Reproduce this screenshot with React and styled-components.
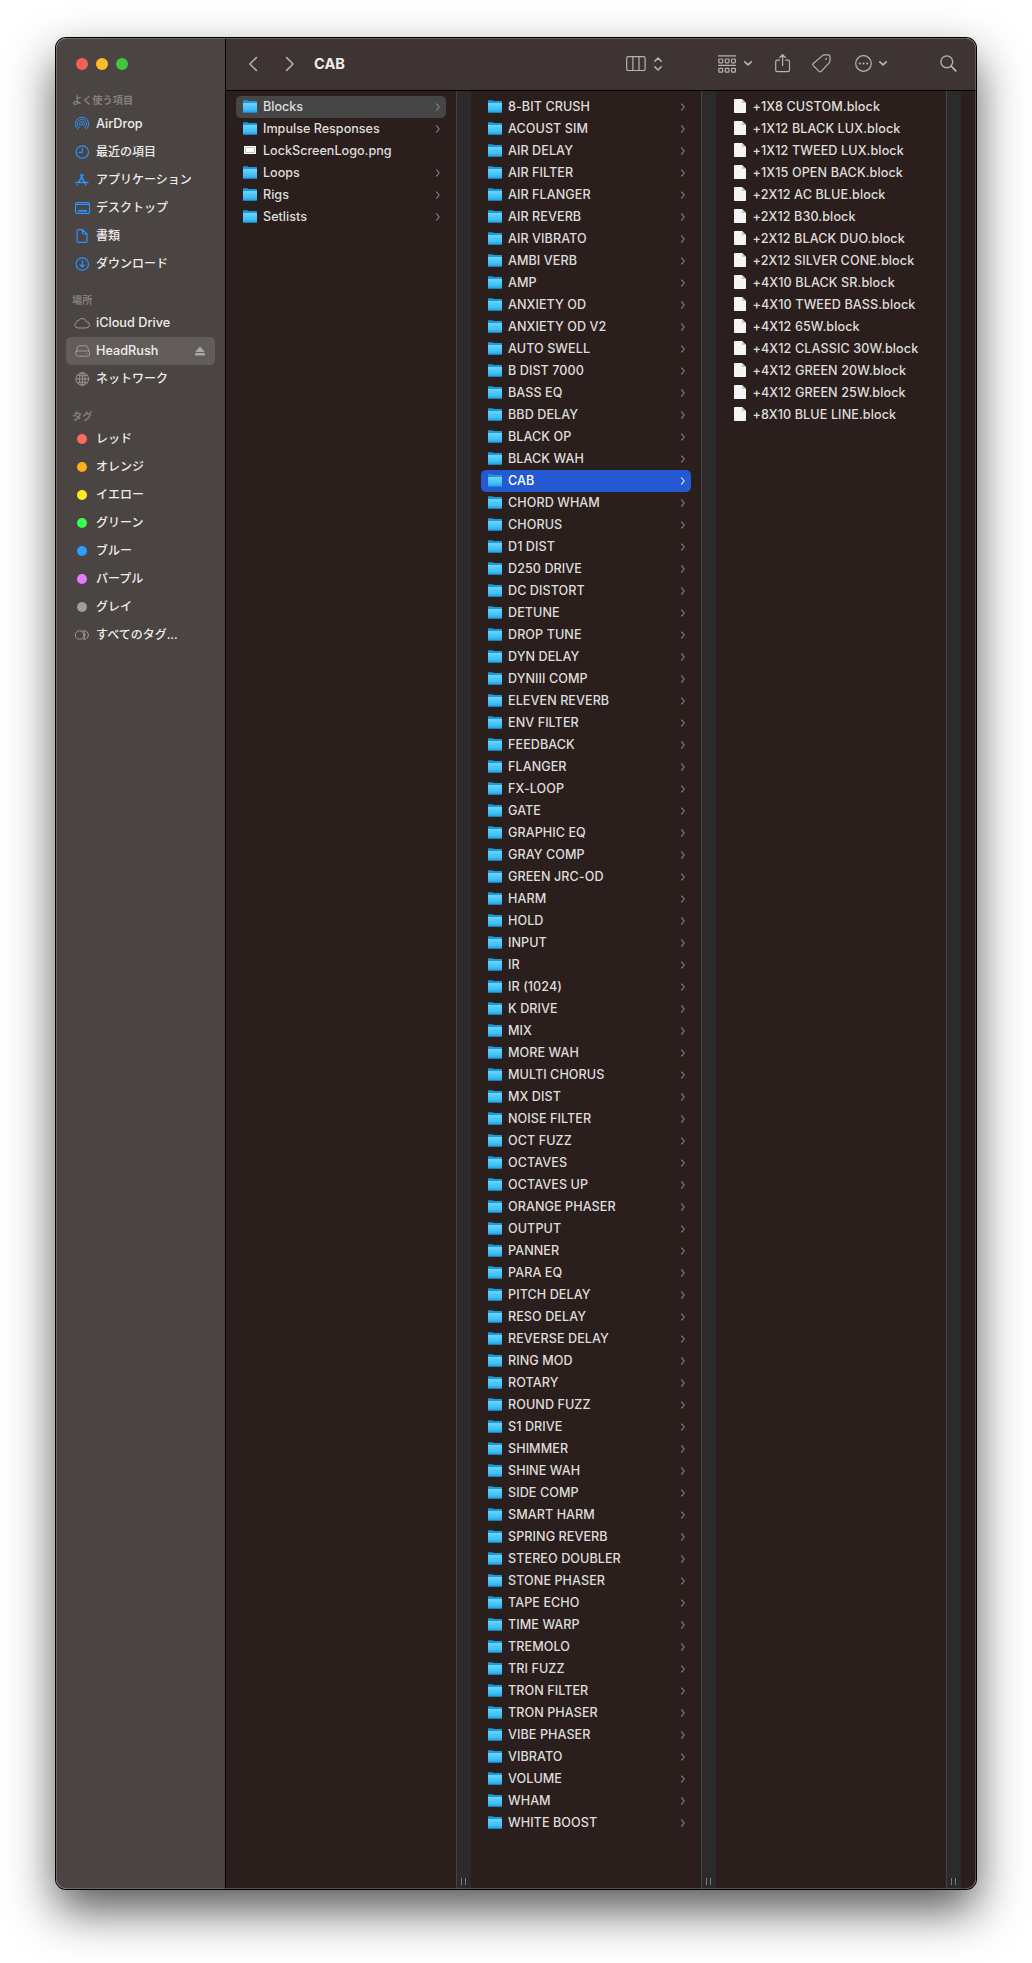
import React from "react";
import styled, { createGlobalStyle } from "styled-components";

const Global = createGlobalStyle`
  html, body { margin: 0; background: #fff; }
  *, *::before, *::after { box-sizing: border-box; }
  body { font-family: Inter, "Noto Sans CJK JP", sans-serif; }
`;

const Page = styled.main`
  height: 1963px;
  overflow: hidden;
  padding: 38px 56px 0;
`;

const Win = styled.div`
  position: relative;
  width: 920px;
  height: 1851px;
  display: flex;
  border-radius: 10px;
  box-shadow: 0 0 0 1px #000, 0 21px 47px 0 rgba(0, 0, 0, 0.67);
  &::after {
    content: "";
    position: absolute;
    inset: 0;
    border-radius: 10px;
    box-shadow: inset 0 0 0 1px rgba(255, 255, 255, 0.2);
    pointer-events: none;
  }
`;

const Sidebar = styled.aside`
  flex: none;
  width: 170px;
  padding: 20px 10px 0 10px;
  background: #4a4443;
  border-right: 1px solid #000;
  border-radius: 10px 0 0 10px;
`;

const Lights = styled.div`
  display: flex;
  gap: 8px;
  padding-left: 10px;
  height: 12px;
`;

const Light = styled.i`
  width: 12px;
  height: 12px;
  border-radius: 50%;
  background: ${(p) => p.$color};
`;

const Heading = styled.h2`
  margin: ${(p) => p.$top}px 0 0;
  padding-left: 6px;
  height: 18px;
  font-size: 10.2px;
  line-height: 18px;
  font-weight: 700;
  color: #857f7e;
`;

const Favorites = styled.div`
  padding-top: 1px;
`;

const SideRow = styled.div`
  height: 28px;
  display: flex;
  align-items: center;
  padding: 0 10px 0 8px;
  border-radius: 5px;
  font-size: ${(p) => (p.$latin ? 12.7 : 12)}px;
  font-weight: 500;
  color: #efedec;
  white-space: nowrap;
  background: ${(p) => (p.$on ? "#635d59" : "transparent")};
`;

const SideIcon = styled.span`
  width: 16px;
  height: 16px;
  margin-right: 6px;
  display: grid;
  place-items: center;
  color: ${(p) => p.$color};
`;

const SideLabel = styled.span`
  flex: 1;
  line-height: 18px;
`;

const TagDot = styled.i`
  width: 10px;
  height: 10px;
  border-radius: 50%;
  background: ${(p) => p.$color};
`;

const Main = styled.section`
  flex: 1;
  min-width: 0;
  display: flex;
  flex-direction: column;
  border-radius: 0 10px 10px 0;
  overflow: hidden;
`;

const Toolbar = styled.header`
  flex: none;
  height: 53px;
  display: flex;
  align-items: center;
  padding: 0 19px 1px 20px;
  background: #3e3434;
  border-bottom: 1px solid #000;
  color: #b9b1b0;
`;

const Title = styled.h1`
  flex: 1;
  margin: 0 0 0 20px;
  font-size: 14.6px;
  font-weight: 700;
  color: #efecec;
`;

const Tool = styled.span`
  display: flex;
  align-items: center;
  margin-left: ${(p) => p.$gap || 0}px;
`;

const Columns = styled.div`
  flex: 1;
  display: flex;
  background: #2a1f1d;
`;

const Column = styled.div`
  flex: none;
  width: 245px;
  display: flex;
`;

const List = styled.ul`
  flex: 1;
  margin: 0;
  padding: 5px 10px;
  list-style: none;
`;

const Row = styled.li`
  height: 22px;
  display: flex;
  align-items: center;
  padding: 0 6px 2px 7px;
  border-radius: 5px;
  font-size: 12.6px;
  font-weight: 450;
  letter-spacing: ${(p) => p.$track || 0}px;
  white-space: nowrap;
  color: ${(p) => (p.$on === "blue" ? "#fff" : "#dfdddc")};
  background: ${(p) => (p.$on === "blue" ? "#2459d2" : p.$on ? "#464646" : "transparent")};
`;

const RowIcon = styled.span`
  flex: none;
  width: 14px;
  height: 21px;
  margin-right: ${(p) => p.$gap}px;
  display: grid;
  place-items: center;
`;

const RowLabel = styled.span`
  flex: 1;
`;

const Chevron = styled.span`
  display: flex;
  padding-top: 1px;
  color: ${(p) => (p.$on ? "#e8eefb" : "#8a8483")};
`;

const Gutter = styled.div`
  width: 15px;
  display: flex;
  align-items: flex-end;
  justify-content: center;
  gap: 3px;
  padding: 0 1px 4px 0;
  background: #2b2b2b;
  border-left: 1px solid #464242;
`;

const Grip = styled.i`
  width: 1px;
  height: 7px;
  background: #7c7c7c;
`;

const Svg = ({ w, h, sw = 1.2, children }) => (
  <svg width={w} height={h} viewBox={`0 0 ${w} ${h}`} fill="none" stroke="currentColor"
    strokeWidth={sw} strokeLinecap="round" strokeLinejoin="round" overflow="visible">
    {children}
  </svg>
);

const icons = {
  airdrop: (
    <Svg w={14} h={14} sw={0.95}>
      <path d="M3.2 12.5A6.7 6.7 0 1 1 10.8 12.5M4.2 10.7A4.6 4.6 0 1 1 9.8 10.7M5.2 8.9A2.5 2.5 0 1 1 8.8 8.9" />
      <circle cx="7" cy="7.3" r="0.9" fill="currentColor" stroke="none" />
    </Svg>
  ),
  clock: (
    <Svg w={14} h={14} sw={1.2}>
      <circle cx="7.3" cy="7" r="6.2" />
      <path d="M7.3 3.2V7.3H4" />
    </Svg>
  ),
  apps: (
    <Svg w={14} h={14} sw={1.5}>
      <path d="M5.6 1.6L10.8 11.8M8.1 1.6L3.6 9.2M2.2 11.8L2 12.2M0.8 9.4H8.2M10.4 9.4H12.9" />
    </Svg>
  ),
  desktop: (
    <Svg w={15} h={12} sw={1.2}>
      <rect x="0.6" y="0.6" width="13.9" height="10.8" rx="1.4" />
      <path d="M0.6 2.5H14.5" />
      <path d="M3.2 8.8H12" strokeWidth="1.7" strokeLinecap="butt" />
    </Svg>
  ),
  doc: (
    <Svg w={12} h={14} sw={1.2}>
      <path d="M6.6 0.6H2.4Q1.1 0.6 1.1 1.9V12.1Q1.1 13.4 2.4 13.4H9.7Q11 13.4 11 12.1V5L6.6 0.6V3.7Q6.6 5 7.9 5H11" />
    </Svg>
  ),
  download: (
    <Svg w={14} h={14} sw={1.2}>
      <circle cx="7.3" cy="7" r="6.2" />
      <path d="M7.3 3.9V10M5 7.8L7.3 10.1L9.6 7.8" />
    </Svg>
  ),
  cloud: (
    <Svg w={16} h={12} sw={1}>
      <path d="M3.7 11A3 3 0 0 1 2.5 5.3A2.3 2.3 0 0 1 5 3.2A4 4 0 0 1 12.2 4.6A3.2 3.2 0 0 1 12.4 11Z" />
    </Svg>
  ),
  drive: (
    <Svg w={15} h={12} sw={1}>
      <path d="M1 6.8L2.7 1.8Q3.1 0.8 4.2 0.8H11Q12.1 0.8 12.5 1.8L14.2 6.8" />
      <rect x="0.7" y="6" width="13.8" height="5.2" rx="2" />
      <path d="M11.8 8.6H12" />
    </Svg>
  ),
  globe: (
    <Svg w={14} h={14} sw={0.9}>
      <circle cx="7.3" cy="7" r="6.3" />
      <ellipse cx="7.3" cy="7" rx="3" ry="6.3" />
      <path d="M1 7H13.6M7.3 0.7V13.3M2.6 3.2Q7.3 5.2 12 3.2M2.6 10.8Q7.3 8.8 12 10.8" />
    </Svg>
  ),
  tags: (
    <Svg w={14} h={10} sw={1}>
      <circle cx="4.6" cy="5" r="4.3" />
      <path d="M8.2 0.8A4.3 4.3 0 1 1 8.2 9.2A5.6 5.6 0 0 0 8.2 0.8" />
    </Svg>
  ),
};

const Eject = () => (
  <svg width="10" height="10" viewBox="0 0 10 10" fill="#aaa6a3">
    <path d="M5 0.2L9.8 5.9H0.2Z" />
    <rect x="0" y="7" width="10" height="2.4" rx="0.4" />
  </svg>
);

const Folder = () => (
  <svg width="14" height="13" viewBox="0 0 14 13">
    <defs>
      <linearGradient id="folderFace" x1="0" y1="0" x2="0" y2="1">
        <stop offset="0" stopColor="#6bd4fd" />
        <stop offset="0.7" stopColor="#3fbcf6" />
        <stop offset="1" stopColor="#24a3e6" />
      </linearGradient>
    </defs>
    <path d="M0 0.7Q0 0.2 0.6 0.2H4.6L5.6 1.1H13.4Q14 1.1 14 1.7V12.3H0Z" fill="#1b9ad9" />
    <path d="M0 3H14V12Q14 12.6 13.4 12.6H0.6Q0 12.6 0 12Z" fill="url(#folderFace)" />
    <path d="M0.2 12.3H13.8" stroke="#158fce" strokeWidth="0.7" />
  </svg>
);

const FileIcon = () => (
  <svg width="12" height="14" viewBox="0 0 12 14">
    <path d="M0.7 0H8L12 4V13.3Q12 14 11.3 14H0.7Q0 14 0 13.3V0.7Q0 0 0.7 0Z" fill="#f5f5f5" />
    <path d="M8 0L12 4H8.6Q8 4 8 3.4Z" fill="#c9c9c9" />
  </svg>
);

const Png = () => (
  <svg width="12" height="8" viewBox="0 0 12 8">
    <rect width="12" height="8" fill="#fff" />
    <rect x="1.5" y="1.5" width="9" height="5" fill="#fff" stroke="#c4c4c4" />
  </svg>
);

const favorites = [
  ["airdrop", "AirDrop", true],
  ["clock", "最近の項目"],
  ["apps", "アプリケーション"],
  ["desktop", "デスクトップ"],
  ["doc", "書類"],
  ["download", "ダウンロード"],
];

const places = [
  ["cloud", "iCloud Drive", true],
  ["drive", "HeadRush", true],
  ["globe", "ネットワーク"],
];

const tags = [
  ["#fe6962", "レッド"],
  ["#ffae1f", "オレンジ"],
  ["#ffec1f", "イエロー"],
  ["#3dfb55", "グリーン"],
  ["#2f9dff", "ブルー"],
  ["#e57bff", "パープル"],
  ["#a09da2", "グレイ"],
];

const root = ["Blocks", "Impulse Responses", "LockScreenLogo.png", "Loops", "Rigs", "Setlists"];

const blocks = `8-BIT CRUSH|ACOUST SIM|AIR DELAY|AIR FILTER|AIR FLANGER|AIR REVERB|AIR VIBRATO|AMBI VERB|AMP|ANXIETY OD|ANXIETY OD V2|AUTO SWELL|B DIST 7000|BASS EQ|BBD DELAY|BLACK OP|BLACK WAH|CAB|CHORD WHAM|CHORUS|D1 DIST|D250 DRIVE|DC DISTORT|DETUNE|DROP TUNE|DYN DELAY|DYNIII COMP|ELEVEN REVERB|ENV FILTER|FEEDBACK|FLANGER|FX-LOOP|GATE|GRAPHIC EQ|GRAY COMP|GREEN JRC-OD|HARM|HOLD|INPUT|IR|IR (1024)|K DRIVE|MIX|MORE WAH|MULTI CHORUS|MX DIST|NOISE FILTER|OCT FUZZ|OCTAVES|OCTAVES UP|ORANGE PHASER|OUTPUT|PANNER|PARA EQ|PITCH DELAY|RESO DELAY|REVERSE DELAY|RING MOD|ROTARY|ROUND FUZZ|S1 DRIVE|SHIMMER|SHINE WAH|SIDE COMP|SMART HARM|SPRING REVERB|STEREO DOUBLER|STONE PHASER|TAPE ECHO|TIME WARP|TREMOLO|TRI FUZZ|TRON FILTER|TRON PHASER|VIBE PHASER|VIBRATO|VOLUME|WHAM|WHITE BOOST`.split("|");

const files = [
  "+1X8 CUSTOM", "+1X12 BLACK LUX", "+1X12 TWEED LUX", "+1X15 OPEN BACK", "+2X12 AC BLUE",
  "+2X12 B30", "+2X12 BLACK DUO", "+2X12 SILVER CONE", "+4X10 BLACK SR", "+4X10 TWEED BASS",
  "+4X12 65W", "+4X12 CLASSIC 30W", "+4X12 GREEN 20W", "+4X12 GREEN 25W", "+8X10 BLUE LINE",
];

function Item({ name, kind = "folder", on, track }) {
  return (
    <Row $on={on} $track={track}>
      <RowIcon $gap={kind === "file" ? 5.5 : 6}>
        {kind === "folder" ? <Folder /> : kind === "file" ? <FileIcon /> : <Png />}
      </RowIcon>
      <RowLabel>{name}</RowLabel>
      {kind === "folder" && (
        <Chevron $on={on === "blue"}>
          <Svg w={4} h={8} sw={1.1}><path d="M0.6 0.9L3.2 4L0.6 7.1" /></Svg>
        </Chevron>
      )}
    </Row>
  );
}

function BrowserColumn({ children }) {
  return (
    <Column>
      <List>{children}</List>
      <Gutter><Grip /><Grip /></Gutter>
    </Column>
  );
}

export default function App() {
  return (
    <Page>
      <Global />
      <Win>
        <Sidebar>
          <Lights>
            <Light $color="#f65f57" />
            <Light $color="#fbbc2f" />
            <Light $color="#3fc83f" />
          </Lights>
          <Heading $top={21}>よく使う項目</Heading>
          <Favorites>
            {favorites.map(([icon, label, latin]) => (
              <SideRow key={label} $latin={latin}>
                <SideIcon $color="#2c94ff">{icons[icon]}</SideIcon>
                <SideLabel>{label}</SideLabel>
              </SideRow>
            ))}
          </Favorites>
          <Heading $top={13}>場所</Heading>
          {places.map(([icon, label, latin]) => (
            <SideRow key={label} $latin={latin} $on={label === "HeadRush"}>
              <SideIcon $color="#9e9998">{icons[icon]}</SideIcon>
              <SideLabel>{label}</SideLabel>
              {label === "HeadRush" && <Eject />}
            </SideRow>
          ))}
          <Heading $top={14}>タグ</Heading>
          {tags.map(([color, label]) => (
            <SideRow key={label}>
              <SideIcon><TagDot $color={color} /></SideIcon>
              <SideLabel>{label}</SideLabel>
            </SideRow>
          ))}
          <SideRow>
            <SideIcon $color="#9e9998">{icons.tags}</SideIcon>
            <SideLabel>すべてのタグ...</SideLabel>
          </SideRow>
        </Sidebar>
        <Main>
          <Toolbar>
            <Tool $gap={3}><Svg w={8} h={14} sw={1.5}><path d="M7.4 0.6L0.9 7L7.4 13.4" /></Svg></Tool>
            <Tool $gap={29}><Svg w={8} h={14} sw={1.5}><path d="M0.6 0.6L7.1 7L0.6 13.4" /></Svg></Tool>
            <Title>CAB</Title>
            <Tool>
              <Svg w={20} h={15} sw={1.2}>
                <rect x="0.7" y="0.7" width="18.4" height="13.8" rx="1.6" />
                <path d="M6.9 0.7V14.5M13 0.7V14.5" />
              </Svg>
            </Tool>
            <Tool $gap={8}><Svg w={8} h={14} sw={1.6}><path d="M0.8 4.2L4 1L7.2 4.2M0.8 9.8L4 13L7.2 9.8" /></Svg></Tool>
            <Tool $gap={56}>
              <Svg w={18} h={18} sw={1.2}>
                <path d="M0.5 0.9H17.5M0.5 10.3H17.5" />
                {[4, 13.4].map((y) => [0.8, 7.2, 13.6].map((x) => (
                  <rect key={`${x}-${y}`} x={x} y={y} width="3.8" height="3.8" rx="0.8" />
                )))}
              </Svg>
            </Tool>
            <Tool $gap={8}><Svg w={8} h={5} sw={1.7}><path d="M0.8 0.8L4 3.9L7.2 0.8" /></Svg></Tool>
            <Tool $gap={23}>
              <Svg w={15} h={19} sw={1.2}>
                <path d="M4.5 6.2H2.3Q0.7 6.2 0.7 7.8V16Q0.7 17.6 2.3 17.6H12.9Q14.5 17.6 14.5 16V7.8Q14.5 6.2 12.9 6.2H10.7M7.6 11.6V0.8M4.6 3.6L7.6 0.7L10.6 3.6" />
              </Svg>
            </Tool>
            <Tool $gap={22}>
              <Svg w={19} h={19} sw={1.2}>
                <path d="M10.4 1.6Q11.2 0.9 12.3 0.9H16.4Q18 0.9 18 2.5V6.8Q18 7.9 17.3 8.7L9.3 17.4Q8.2 18.4 7.2 17.4L1.2 11.6Q0.2 10.5 1.3 9.5Z" />
                <circle cx="14.1" cy="4.9" r="0.9" fill="currentColor" stroke="none" />
              </Svg>
            </Tool>
            <Tool $gap={24}>
              <Svg w={17} h={17} sw={1.2}>
                <circle cx="8.5" cy="8.5" r="7.8" />
                <path d="M4.8 8.5H4.81M8.5 8.5H8.51M12.2 8.5H12.21" strokeWidth="2.1" />
              </Svg>
            </Tool>
            <Tool $gap={7}><Svg w={8} h={5} sw={1.7}><path d="M0.8 0.8L4 3.9L7.2 0.8" /></Svg></Tool>
            <Tool $gap={53}>
              <Svg w={17} h={17} sw={1.4}>
                <circle cx="6.8" cy="6.8" r="5.9" />
                <path d="M11.2 11.2L15.8 15.8" strokeWidth="1.8" />
              </Svg>
            </Tool>
          </Toolbar>
          <Columns>
            <BrowserColumn>
              {root.map((n) => (
                <Item key={n} name={n} kind={n.endsWith(".png") ? "png" : "folder"} on={n === "Blocks" && "gray"} />
              ))}
            </BrowserColumn>
            <BrowserColumn>
              {blocks.map((n) => <Item key={n} name={n} on={n === "CAB" && "blue"} track={0.06} />)}
            </BrowserColumn>
            <BrowserColumn>
              {files.map((n) => <Item key={n} name={`${n}.block`} kind="file" track={0.1} />)}
            </BrowserColumn>
          </Columns>
        </Main>
      </Win>
    </Page>
  );
}
